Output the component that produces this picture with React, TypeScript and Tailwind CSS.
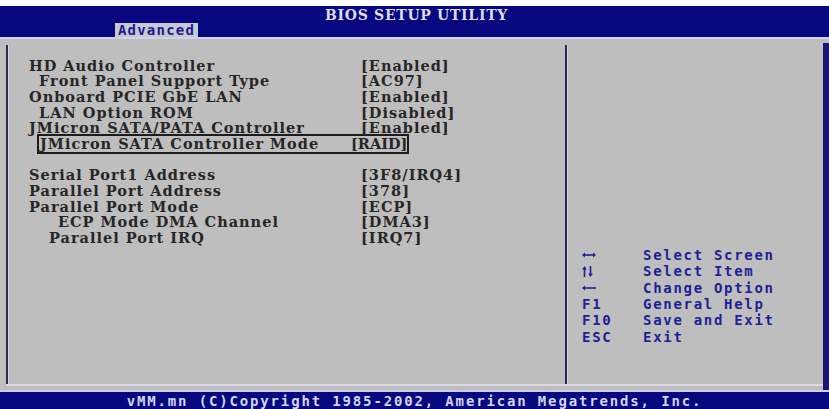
// BIOS setup utility — Advanced screen
const serif = { fontFamily: '"DejaVu Serif", "Liberation Serif", serif' };
const pixel = { fontFamily: '"DejaVu Sans Mono", monospace' };

interface Row {
  label: string;
  value: string;
  indent: number;
  boxed?: boolean;
}

const upper: Row[] = [
  { label: "HD Audio Controller", value: "[Enabled]", indent: 0 },
  { label: "Front Panel Support Type", value: "[AC97]", indent: 10 },
  { label: "Onboard PCIE GbE LAN", value: "[Enabled]", indent: 0 },
  { label: "LAN Option ROM", value: "[Disabled]", indent: 10 },
  { label: "JMicron SATA/PATA Controller", value: "[Enabled]", indent: 0 },
  { label: "JMicron SATA Controller Mode", value: "[RAID]", indent: 0, boxed: true },
];

const lower: Row[] = [
  { label: "Serial Port1 Address", value: "[3F8/IRQ4]", indent: 0 },
  { label: "Parallel Port Address", value: "[378]", indent: 0 },
  { label: "Parallel Port Mode", value: "[ECP]", indent: 0 },
  { label: "ECP Mode DMA Channel", value: "[DMA3]", indent: 29 },
  { label: "Parallel Port IRQ", value: "[IRQ7]", indent: 20 },
];

function KeyArrow({ kind }: { kind: string }) {
  if (kind === "lr") {
    return (
      <svg width="14" height="8" viewBox="0 0 14 8" fill="#1e1e96">
        <rect x="2" y="3.2" width="10" height="1.6" />
        <path d="M0 4 L3 1.5 L3 6.5 Z" />
        <path d="M14 4 L11 1.5 L11 6.5 Z" />
      </svg>
    );
  }
  if (kind === "ud") {
    return (
      <svg width="11" height="11" viewBox="0 0 11 11" fill="#1e1e96">
        <rect x="1.7" y="3" width="1.6" height="8" />
        <path d="M2.5 0 L0.2 3.5 L4.8 3.5 Z" />
        <rect x="7.7" y="0" width="1.6" height="8" />
        <path d="M8.5 11 L6.2 7.5 L10.8 7.5 Z" />
      </svg>
    );
  }
  return (
    <svg width="14" height="8" viewBox="0 0 14 8" fill="#1e1e96">
      <rect x="2" y="3.2" width="12" height="1.6" />
      <path d="M0 4 L3 1.5 L3 6.5 Z" />
    </svg>
  );
}

const help: [string, string][] = [
  ["lr", "Select Screen"],
  ["ud", "Select Item"],
  ["l", "Change Option"],
  ["F1", "General Help"],
  ["F10", "Save and Exit"],
  ["ESC", "Exit"],
];

function SettingRow({ row }: { row: Row }) {
  if (row.boxed) {
    return (
      <div className="flex ml-[8px] w-[372px] h-[19.7px] -my-[2px] border-2 border-[#1c1c1c] pl-[1px] items-center">
        <div className="w-[311px] shrink-0">{row.label}</div>
        <div className="tracking-[0px]">{row.value}</div>
      </div>
    );
  }
  return (
    <div className="flex h-[15.7px] items-center">
      <div className="w-[332px] shrink-0" style={{ paddingLeft: row.indent }}>
        {row.label}
      </div>
      <div>{row.value}</div>
    </div>
  );
}

export default function App() {
  return (
    <div className="w-[829px] h-[409px] bg-white flex flex-col overflow-hidden">
      <div className="h-[6px] bg-white" />

      {/* header */}
      <div className="h-[31px] bg-[#07077f] flex flex-col">
        <div
          className="h-[17px] flex items-center justify-center pl-[4px] text-[14px] font-bold tracking-[0.7px] text-[#dcdcee] leading-none whitespace-pre"
          style={serif}
        >
          BIOS SETUP UTILITY
        </div>
        <div className="h-[14px] pl-[115px] flex">
          <div
            className="w-[83px] bg-[#c9c9d6] text-[#1b1b8c] text-[14px] font-bold tracking-[1.2px] flex items-center justify-center leading-none"
            style={pixel}
          >
            Advanced
          </div>
        </div>
      </div>
      <div className="h-[2px] bg-[#d2d2e2]" />

      {/* main */}
      <div className="flex-1 bg-[#bebebe] flex pl-[6px]">
        <div className="flex-1 flex flex-col pt-[6px]">
          <div className="h-[339px] flex">
            <div className="w-[2px] bg-[#2a2a5c]" />
            <div className="w-[1px] bg-[#d4d4e2]" />
            <div
              className="w-[556px] pl-[20px] pt-[13px] text-[14.5px] font-bold tracking-[1px] leading-none text-[#262626] whitespace-pre"
              style={serif}
            >
              {upper.map((r) => (
                <SettingRow key={r.label} row={r} />
              ))}
              <div className="h-[15.7px]" />
              {lower.map((r) => (
                <SettingRow key={r.label} row={r} />
              ))}
            </div>
            <div className="w-[2px] bg-[#2a2a55]" />
            <div className="w-[1px] bg-[#d4d4e2]" />
            <div
              className="flex-1 pt-[202px] pl-[14px] text-[14px] font-bold tracking-[1.7px] text-[#1e1e96]"
              style={pixel}
            >
              {help.map(([k, d]) => (
                <div key={d} className="flex h-[16.3px] items-center leading-none">
                  <div className="w-[61px] flex items-center">
                    {k === "lr" || k === "ud" || k === "l" ? <KeyArrow kind={k} /> : k}
                  </div>
                  <div>{d}</div>
                </div>
              ))}
            </div>
          </div>
          <div className="h-[2px] bg-[#d8d8e6]" />
        </div>
        <div className="w-[6px] mt-[4px] bg-[#17176e]" />
      </div>

      {/* footer */}
      <div className="h-[2px] bg-[#cfcfe3]" />
      <div
        className="h-[17px] bg-[#07077f] flex items-center justify-center text-[14px] font-bold tracking-[1.85px] text-[#d4d4f4] leading-none whitespace-pre"
        style={pixel}
      >
        vMM.mn (C)Copyright 1985-2002, American Megatrends, Inc.
      </div>
    </div>
  );
}
